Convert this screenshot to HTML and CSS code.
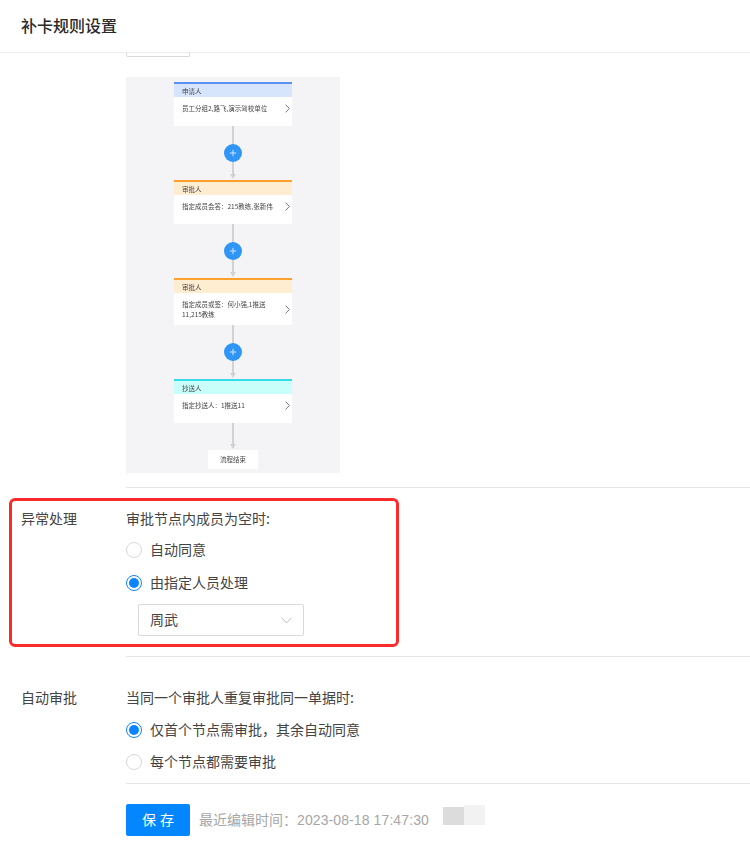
FILE: index.html
```html
<!DOCTYPE html>
<html lang="zh-CN">
<head>
<meta charset="utf-8">
<title>补卡规则设置</title>
<link rel="stylesheet" href="styles.css">
</head>
<body>
<div class="page">
  <header class="topbar"><h1 class="title">补卡规则设置</h1></header>

  <section class="flow-section">
    <div class="stub"></div>
    <div class="flow">
      <div class="node node-blue">
        <div class="node-head">申请人</div>
        <div class="node-body"><div class="node-row"><span class="node-text">员工分组2,路飞,演示驾校单位</span><svg class="chev" viewBox="0 0 5 9"><path d="M.6.6 4.4 4.5.6 8.4"/></svg></div></div>
      </div>
      <div class="link">
        <div class="plus"><svg viewBox="0 0 8 8"><path d="M4 .8v6.4M.8 4h6.4"/></svg></div>
      </div>
      <div class="node node-orange">
        <div class="node-head">审批人</div>
        <div class="node-body"><div class="node-row"><span class="node-text">指定成员会答：215教练,张新伟</span><svg class="chev" viewBox="0 0 5 9"><path d="M.6.6 4.4 4.5.6 8.4"/></svg></div></div>
      </div>
      <div class="link">
        <div class="plus"><svg viewBox="0 0 8 8"><path d="M4 .8v6.4M.8 4h6.4"/></svg></div>
      </div>
      <div class="node node-orange">
        <div class="node-head">审批人</div>
        <div class="node-body node-body-tall"><div class="node-row"><span class="node-text">指定成员或签：何小强,1推送<br>11,215教练</span><svg class="chev" viewBox="0 0 5 9"><path d="M.6.6 4.4 4.5.6 8.4"/></svg></div></div>
      </div>
      <div class="link">
        <div class="plus"><svg viewBox="0 0 8 8"><path d="M4 .8v6.4M.8 4h6.4"/></svg></div>
      </div>
      <div class="node node-cyan">
        <div class="node-head">抄送人</div>
        <div class="node-body"><div class="node-row"><span class="node-text">指定抄送人：1推送11</span><svg class="chev" viewBox="0 0 5 9"><path d="M.6.6 4.4 4.5.6 8.4"/></svg></div></div>
      </div>
      <div class="link link-short"></div>
      <div class="flow-end">流程结束</div>
    </div>
  </section>

  <section class="row row-exception">
    <div class="row-label">异常处理</div>
    <div class="row-main">
      <div class="question">审批节点内成员为空时:</div>
      <div class="radios radios-spaced">
        <label class="radio"><span class="dot"></span><span class="radio-text">自动同意</span></label>
        <label class="radio"><span class="dot dot-on"></span><span class="radio-text">由指定人员处理</span></label>
      </div>
      <div class="select"><span class="radio-text">周武</span><svg class="select-arrow" viewBox="0 0 11 7"><path d="M.5.7 5.5 6l5-5.3"/></svg></div>
    </div>
    <div class="highlight"></div>
  </section>

  <section class="row row-auto">
    <div class="row-label">自动审批</div>
    <div class="row-main">
      <div class="question">当同一个审批人重复审批同一单据时:</div>
      <div class="radios radios-tight">
        <label class="radio"><span class="dot dot-on"></span><span class="radio-text">仅首个节点需审批，其余自动同意</span></label>
        <label class="radio"><span class="dot"></span><span class="radio-text">每个节点都需要审批</span></label>
      </div>
    </div>
  </section>

  <footer class="actions">
    <button class="save">保 存</button>
    <span class="edited">最近编辑时间：<span class="edited-date">2023-08-18 17:47:30</span></span>
    <div class="smudge"><span class="smudge-left"></span><span class="smudge-right"></span></div>
  </footer>
</div>
</body>
</html>
```

FILE: styles.css
```css
* { box-sizing: border-box; }

html, body {
  margin: 0;
  padding: 0;
  background: #fff;
}

body {
  font-family: "Noto Sans CJK SC", "Liberation Sans", sans-serif;
  font-size: 14px;
  color: #444;
}

.page {
  width: 750px;
  height: 854px;
  overflow: hidden;
}

.topbar {
  height: 53px;
  padding-left: 21px;
  border-bottom: 1px solid #eee;
  display: flex;
  align-items: center;
}

.title {
  margin: 0 0 3px;
  font-size: 16px;
  line-height: 24px;
  font-weight: 500;
  color: #2b2b2b;
}

.flow-section {
  margin-left: 126px;
  padding-bottom: 14px;
  border-bottom: 1px solid #e6e6e6;
  height: 435px;
}

.stub {
  width: 64px;
  height: 4px;
  border: 1px solid #d9d9d9;
  border-top: 0;
  border-radius: 0 0 2px 2px;
}

.flow {
  margin-top: 20px;
  width: 214px;
  height: 396px;
  padding-top: 5px;
  background: #f4f4f6;
  display: flex;
  flex-direction: column;
  align-items: center;
  filter: blur(.4px);
}

.node {
  width: 118px;
  background: #fff;
  border-top: 2px solid;
}

.node-head {
  height: 13px;
  padding: 1px 0 0 8px;
  font-size: 6.5px;
  line-height: 12px;
  color: #444;
}

.node-blue { border-color: #5b90f0; }
.node-blue .node-head { background: #d6e4fc; }
.node-orange { border-color: #ff9f2e; }
.node-orange .node-head { background: #ffedd2; }
.node-cyan { border-color: #35dbe6; }
.node-cyan .node-head { background: #c9fffa; }

.node-body {
  height: 29px;
  padding: 6px 2px 0 8px;
}

.node-body-tall {
  height: 32px;
  padding-top: 6px;
}

.node-row {
  display: flex;
  align-items: center;
  justify-content: space-between;
}

.node-text {
  font-size: 6.5px;
  line-height: 10px;
  color: #444;
}

.chev {
  width: 5px;
  height: 9px;
  flex: none;
  fill: none;
  stroke: #555;
  stroke-width: .8;
}

.link {
  position: relative;
  width: 100%;
  height: 54px;
  display: flex;
  align-items: center;
  justify-content: center;
}

.link::before {
  content: "";
  position: absolute;
  top: 0;
  bottom: 3px;
  left: 106px;
  width: 2px;
  background: #d2d2d2;
}

.link::after {
  content: "";
  position: absolute;
  bottom: 1px;
  left: 104px;
  border-style: solid;
  border-width: 5px 3px 0;
  border-color: #d2d2d2 transparent transparent;
}

.link-short { height: 27px; }

.plus {
  position: relative;
  z-index: 1;
  width: 18px;
  height: 18px;
  border-radius: 50%;
  background: #2f95f6;
  display: flex;
  align-items: center;
  justify-content: center;
}

.plus svg {
  width: 8px;
  height: 8px;
  fill: none;
  stroke: #cfe6ff;
  stroke-width: 1;
}

.flow-end {
  width: 50px;
  height: 19px;
  padding-bottom: 1px;
  background: #fff;
  text-align: center;
  font-size: 6.5px;
  line-height: 18px;
  color: #444;
}

.row {
  position: relative;
  display: flex;
}

.row-label {
  width: 126px;
  height: 22px;
  padding-left: 21px;
  line-height: 20px;
  flex: none;
}

.row-main {
  flex: 1;
  min-width: 0;
}

.question {
  height: 22px;
  line-height: 20px;
}

.row-exception {
  padding-top: 20px;
  height: 169px;
}

.row-exception .row-main {
  padding-bottom: 20px;
  border-bottom: 1px solid #e6e6e6;
}

.row-auto {
  padding-top: 30px;
  height: 127px;
}

.row-auto .row-main {
  border-bottom: 1px solid #e6e6e6;
  height: 97px;
}

.radios { display: flex; flex-direction: column; }
.radios-spaced { margin-top: 4px; gap: 1px; }
.radios-tight { margin-top: 5px; }

.radio {
  height: 32px;
  display: flex;
  align-items: center;
  gap: 8px;
}

.radio-text {
  padding-bottom: 2px;
}

.dot {
  width: 16px;
  height: 16px;
  border: 1px solid #d9d9d9;
  border-radius: 50%;
  background: #fff;
  flex: none;
}

.dot-on {
  border-color: #1284f7;
  display: flex;
  align-items: center;
  justify-content: center;
}

.dot-on::after {
  content: "";
  width: 10px;
  height: 10px;
  border-radius: 50%;
  background: #0a84ff;
}

.select {
  width: 166px;
  height: 32px;
  margin: 5px 0 0 12px;
  padding: 0 11px;
  border: 1px solid #d9d9d9;
  border-radius: 2px;
  display: flex;
  align-items: center;
  justify-content: space-between;
}

.select-arrow {
  width: 11px;
  height: 7px;
  fill: none;
  stroke: #bbb;
  stroke-width: 1;
}

.highlight {
  position: absolute;
  left: 9px;
  top: 10px;
  width: 390px;
  height: 149px;
  border: 3px solid #fb2b2b;
  border-radius: 6px;
  pointer-events: none;
}

.actions {
  margin-left: 126px;
  padding-top: 20px;
  display: flex;
  align-items: flex-start;
}

.save {
  width: 64px;
  height: 32px;
  padding: 0 0 2px;
  border: 0;
  border-radius: 2px;
  background: #0486fe;
  color: #fff;
  font: inherit;
  word-spacing: 1px;
}

.edited {
  margin-left: 9px;
  line-height: 32px;
  color: #a6a6a6;
  font-family: "Liberation Sans", "Noto Sans CJK SC", sans-serif;
}

.edited-date { letter-spacing: .1px; }

.smudge {
  margin: 1px 0 0 14px;
  width: 42px;
  height: 20px;
  display: flex;
  align-items: flex-end;
}

.smudge-left { width: 21px; height: 18px; background: #dcdcdc; }
.smudge-right { width: 21px; height: 20px; background: #f2f2f2; }
```
